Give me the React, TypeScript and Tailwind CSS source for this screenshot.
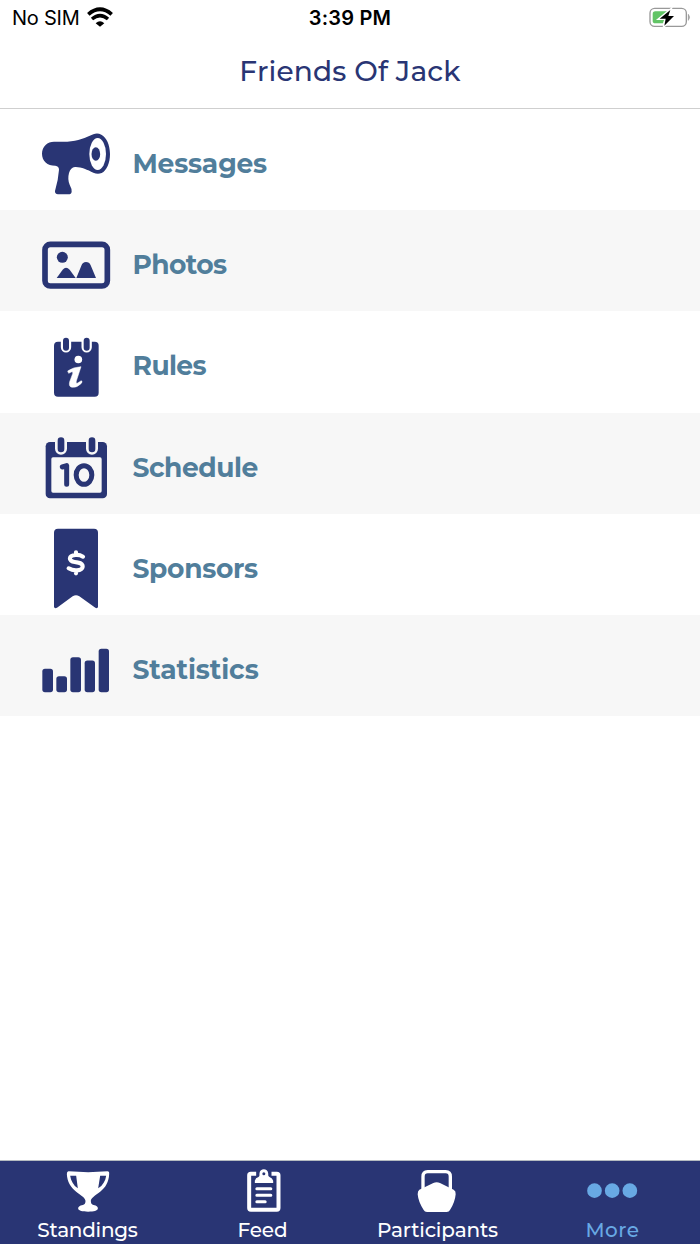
import type { ReactNode } from 'react';

const NAVY = '#293574';

function MegaphoneIcon() {
  return (
    <svg className="h-[90px] w-[72px] shrink-0" viewBox="30 -16 216 270" fill={NAVY}>
      <path d="M72 64 H112 C145 63 166 52 190 42 Q202 37 214 43 C230 51 240 74 240 101 C240 128 230 151 215 158 Q203 163 190 157 C172 148 152 139 135 140 Q122 142 117 158 Q112 177 119 193 Q126 206 125 214 Q124 222 115 222 H84 Q74 221 75 212 Q85 178 87 148 Q87 137 76 136 C52 136 36 122 36 100 C36 78 53 64 72 64 Z" />
      <ellipse cx="203" cy="101" rx="25" ry="48" fill="#fff" />
      <ellipse cx="197.500" cy="101" rx="13" ry="20.500" />
    </svg>
  );
}

function PhotoIcon() {
  return (
    <svg className="h-[90px] w-[72px] shrink-0" viewBox="30 -27 216 270" fill={NAVY}>
      <rect x="45" y="58" width="187" height="125" rx="16" fill="none" stroke={NAVY} strokeWidth="17" />
      <circle cx="97" cy="97" r="16.500" />
      <path d="M80 159 L98 134 Q108 122 119 134 L137 159 Z" />
      <path d="M139 159 L154 122 Q158 111 168 111 Q178 111 182 121 L198 159 Z" />
    </svg>
  );
}

function RulesIcon() {
  return (
    <svg className="h-[90px] w-[72px] shrink-0" viewBox="30 -24 216 270">
      <rect x="72" y="50" width="134" height="165" rx="12" fill={NAVY} />
      <path d="M108 44 V67 M170 44 V67" stroke="#fff" strokeWidth="31" strokeLinecap="round" />
      <path d="M108 47 V68 M170 47 V68" stroke={NAVY} strokeWidth="18" strokeLinecap="round" />
      <circle cx="145" cy="103.500" r="11.500" fill="#fff" />
      <path d="M113 138 Q130 126 153 125 L139 168 Q136 177 143 174 L154 167 Q159 170 153 176 Q141 188 127 187 Q115 186 119 170 L128 146 Q130 138 124 141 L116 145 Z" fill="#fff" stroke="#fff" strokeWidth="1.500" />
    </svg>
  );
}

function CalendarIcon() {
  return (
    <svg className="h-[90px] w-[72px] shrink-0" viewBox="30 -20 216 270">
      <rect x="47" y="52" width="184" height="169" rx="13" fill={NAVY} />
      <rect x="64" y="98" width="151" height="106" rx="5" fill="#f7f7f7" />
      <path d="M93 44 V72 M186 44 V72" stroke="#f7f7f7" strokeWidth="36" strokeLinecap="round" />
      <path d="M93 48 V73 M186 48 V73" stroke={NAVY} strokeWidth="20" strokeLinecap="round" />
      <path d="M97 127 L110 123 V179" fill="none" stroke={NAVY} strokeWidth="15" strokeLinecap="round" strokeLinejoin="round" />
      <ellipse cx="162" cy="151" rx="23.500" ry="28" fill="none" stroke={NAVY} strokeWidth="15" />
    </svg>
  );
}

function SponsorIcon() {
  return (
    <svg className="h-[90px] w-[72px] shrink-0" viewBox="30 -1 216 270">
      <path d="M84 28 H192 Q204 28 204 40 V262 Q203 269 196 265 L148 231 Q138 225 128 231 L81 265 Q73 269 72 262 V40 Q72 28 84 28 Z" fill={NAVY} />
      <path d="M138 99 V105 M138 155 V162 M159 112 Q149 106 137 107 C115 108 114 126 134 128 L145 130 C164 133 162 152 141 153 Q127 154 116 147" fill="none" stroke="#fff" strokeWidth="12.500" strokeLinecap="round" />
    </svg>
  );
}

function StatisticsIcon() {
  return (
    <svg className="h-[90px] w-[72px] shrink-0" viewBox="30 -42.500 216 270" fill={NAVY}>
      <rect x="37" y="101" width="32" height="70" rx="8" />
      <rect x="79" y="123" width="32" height="48" rx="8" />
      <rect x="121" y="66" width="32" height="105" rx="8" />
      <rect x="164" y="76" width="31" height="95" rx="8" />
      <rect x="206" y="41" width="31" height="130" rx="8" />
    </svg>
  );
}

function TrophyIcon() {
  return (
    <svg className="h-12 w-[60px]" viewBox="172.500 39 180 144">
      <path d="M205 52 Q263 57 321 52 Q327 52 326 60 C325 84 315 101 299 113 C282 126 271 132 271 141 Q271 151 279 153 C289 155 293 159 292 165 C290 170 281 173 263 173 C245 173 235 170 233 165 C232 159 237 155 247 153 Q255 151 255 141 C255 132 243 125 227 113 C211 101 200 83 199 60 Q199 51 205 52 Z" fill="#fff" />
      <path d="M209 65 Q218 66 227 65 L232 103 C219 94 211 80 209 65 Z M317 65 Q308 66 299 65 L293 103 C307 94 315 80 317 65 Z" fill={NAVY} />
    </svg>
  );
}

function ClipboardIcon() {
  return (
    <svg className="h-12 w-[60px]" viewBox="697.500 39 180 144">
      <path d="M767 59 H751 Q746 59 746 64 V162 Q746 167 751 167 H829 Q834 167 834 162 V64 Q834 59 829 59 H813" fill="none" stroke="#fff" strokeWidth="12" strokeLinecap="butt" />
      <path d="M763 87 V80 Q765 71 774 69 Q778 66 777 58 C778 42 802 42 803 58 Q802 66 807 69 Q816 72 818 80 V87 Z" fill="#fff" />
      <circle cx="790" cy="59" r="4.500" fill={NAVY} />
      <path d="M769 104 H811 M769 124 H811 M769 143 H794" stroke="#fff" strokeWidth="9" strokeLinecap="round" />
    </svg>
  );
}

function BoatIcon() {
  return (
    <svg className="h-12 w-[60px]" viewBox="174 39 180 144">
      <path d="M219 105 V68 Q219 53 233 53 H287 Q301 53 301 68 V105" fill="none" stroke="#fff" strokeWidth="10" />
      <path d="M208 107 L250 87 Q260 82 270 87 L311 107 Q318 111 317 121 Q315 145 300 168 Q297 174 290 174 H231 Q224 174 221 168 Q205 144 203 121 Q203 110 208 107 Z" fill="#fff" />
    </svg>
  );
}

function DotsIcon() {
  return (
    <svg className="h-12 w-[60px]" viewBox="698.500 39 180 144" fill="#68a9e4">
      <circle cx="733" cy="110" r="22" />
      <circle cx="786" cy="110" r="22" />
      <circle cx="839" cy="110" r="22" />
    </svg>
  );
}

const rows: { label: string; icon: ReactNode; spacing: string }[] = [
  { label: 'Messages', icon: <MegaphoneIcon />, spacing: 'tracking-[-0.2px]' },
  { label: 'Photos', icon: <PhotoIcon />, spacing: 'tracking-[-0.600px]' },
  { label: 'Rules', icon: <RulesIcon />, spacing: 'tracking-[-0.600px]' },
  { label: 'Schedule', icon: <CalendarIcon />, spacing: 'tracking-[-0.450px]' },
  { label: 'Sponsors', icon: <SponsorIcon />, spacing: 'tracking-[-0.300px]' },
  { label: 'Statistics', icon: <StatisticsIcon />, spacing: 'tracking-[-0.100px]' },
];

const tabs: { label: string; icon: ReactNode; style: string }[] = [
  { label: 'Standings', icon: <TrophyIcon />, style: 'text-white tracking-[-0.250px]' },
  { label: 'Feed', icon: <ClipboardIcon />, style: 'text-white tracking-[-0.100px]' },
  { label: 'Participants', icon: <BoatIcon />, style: 'text-white tracking-[-0.150px]' },
  { label: 'More', icon: <DotsIcon />, style: 'text-[#68a9e4] tracking-[0.500px]' },
];

export default function App() {
  return (
    <div className="flex h-[1244px] w-[700px] flex-col overflow-hidden bg-white font-['Montserrat','Inter',sans-serif]">
      <header className="flex h-[109px] shrink-0 flex-col border-b border-[#cfcfcf]">
        <div className="grid h-9 grid-cols-3 items-center px-3 font-['Inter',sans-serif] text-[20px] text-black">
          <div className="flex items-center gap-2">
            <span className="whitespace-nowrap tracking-[-0.250px]">No SIM</span>
            <svg className="mb-0.5 h-5 w-[26px]" viewBox="263 20 78 60">
              <path d="M267 42 Q302 12 337 42" fill="none" stroke="#000" strokeWidth="11.500" />
              <path d="M278 56 Q302 36 326 56" fill="none" stroke="#000" strokeWidth="10.500" />
              <path d="M289 69 Q302 57 315 69 L302 79 Z" />
            </svg>
          </div>
          <span className="text-center font-semibold tracking-[0.200px]">3:39 PM</span>
          <svg className="-mr-[3px] mb-[2px] h-[22px] w-[42px] justify-self-end" viewBox="897 17 126 66">
            <rect x="900" y="24" width="109" height="54" rx="14" fill="none" stroke="#999" strokeWidth="4" />
            <path d="M1015 42 Q1022 51 1015 60 Z" fill="#999" stroke="#999" strokeWidth="2" />
            <path d="M916 33 H951 L939 69 H916 Q908 69 908 61 V41 Q908 33 916 33 Z" fill="#62c466" />
            <path d="M961 29 L929 55 H947 L943 76 L972 47 H955 Z" fill="#000" stroke="#fff" strokeWidth="8" paintOrder="stroke" />
          </svg>
        </div>
        <h1 className="pt-4 text-center text-[28px] leading-[38px] font-medium tracking-[0.200px] text-[#293574]">
          Friends Of Jack
        </h1>
      </header>
      <main className="flex-1">
        {rows.map((row) => (
          <div key={row.label} className="flex h-[101.200px] items-center gap-[20.500px] pl-10 odd:bg-white even:bg-[#f7f7f7]">
            {row.icon}
            <span className={`pt-[9px] text-[26.500px] leading-8 font-bold text-[#517e9b] ${row.spacing}`}>{row.label}</span>
          </div>
        ))}
      </main>
      <nav className="grid h-[84px] shrink-0 grid-cols-4 border-t border-[#b4bbc0] bg-[#293574]">
        {tabs.map((tab) => (
          <div key={tab.label} className="flex flex-col items-center pt-1.5">
            {tab.icon}
            <span className={`text-[20px] leading-[31px] font-medium ${tab.style}`}>{tab.label}</span>
          </div>
        ))}
      </nav>
    </div>
  );
}
